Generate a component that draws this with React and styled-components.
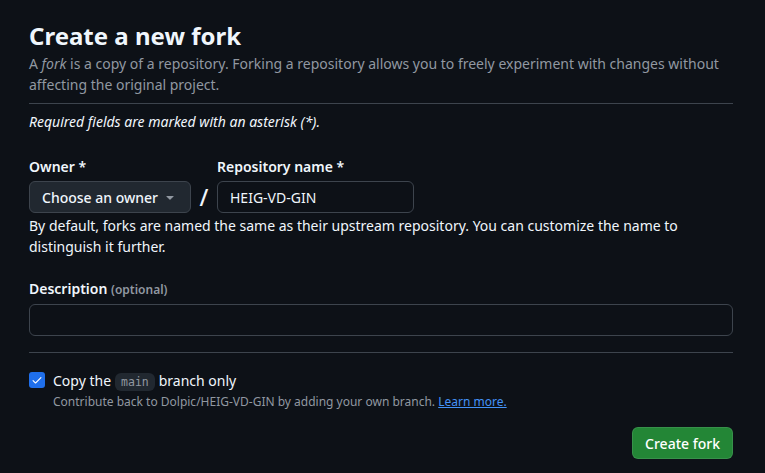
import React from "react";
import styled, { createGlobalStyle } from "styled-components";

const Global = createGlobalStyle`
  html, body {
    margin: 0;
    background: #0d1117;
    color: #f0f6fc;
    font-family: "Noto Sans", "Liberation Sans", sans-serif;
    font-size: 14px;
    line-height: 21px;
  }
  * { box-sizing: border-box; }
`;

const Page = styled.div`
  width: 704px;
  margin-left: 29px;
  padding-top: 21px;
`;

const Title = styled.h1`
  margin: 0;
  font-size: 24px;
  line-height: 30px;
  font-weight: 700;
  color: #f0f6fc;
`;

const Lead = styled.p`
  margin: 2px 0 8px;
  color: #9198a1;
`;

const Divider = styled.hr`
  margin: 0;
  border: 0;
  border-top: 1px solid #3d444d;
`;

const Note = styled.p`
  margin: 7px 0 0;
  font-style: italic;
  color: #f0f6fc;
`;

const Row = styled.div`
  display: flex;
  align-items: flex-end;
  margin-top: ${(p) => p.$top || 0}px;
`;

const Field = styled.div`
  display: flex;
  flex-direction: column;
  gap: 4px;
  flex: ${(p) => (p.$grow ? 1 : "none")};
  width: ${(p) => (p.$width ? `${p.$width}px` : "auto")};
`;

const Label = styled.label`
  font-weight: 600;
  color: #f0f6fc;
  small {
    font-size: 12px;
    color: #9198a1;
    font-weight: 600;
  }
`;

const Select = styled.button`
  height: 32px;
  display: flex;
  align-items: center;
  justify-content: space-between;
  padding: 0 12px 0 12px;
  background: #212830;
  border: 1px solid #3d444d;
  border-radius: 6px;
  color: #f0f6fc;
  font: inherit;
  font-weight: 500;
`;

const Slash = styled.span`
  width: 26px;
  height: 32px;
  display: flex;
  align-items: center;
  justify-content: center;
  font-size: 23px;
  font-weight: 500;
  color: #f0f6fc;
`;

const Input = styled.div`
  height: 32px;
  display: flex;
  align-items: center;
  padding: 0 12px;
  background: #0d1117;
  border: 1px solid #3d444d;
  border-radius: 6px;
  color: #f0f6fc;
`;

const Help = styled.p`
  margin: 2px 0 0;
  color: #f0f6fc;
`;

const Check = styled.div`
  display: flex;
  gap: 8px;
  margin-top: 17px;
`;

const Box = styled.span`
  width: 16px;
  height: 16px;
  margin-top: 2px;
  border-radius: 3px;
  background: #1f6feb;
  display: flex;
  align-items: center;
  justify-content: center;
  flex: none;
`;

const CheckText = styled.div`
  display: flex;
  flex-direction: column;
`;

const Code = styled.code`
  font-family: "DejaVu Sans Mono", "Liberation Mono", monospace;
  font-size: 11.5px;
  color: #9198a1;
  background: #212830;
  border-radius: 6px;
  padding: 2px 6px;
  margin: 0 4px;
`;

const Sub = styled.span`
  font-size: 12px;
  line-height: 18px;
  color: #9198a1;
  a {
    color: #4493f8;
    text-decoration: underline;
  }
`;

const Actions = styled.div`
  display: flex;
  justify-content: flex-end;
  margin-top: 16px;
`;

const Primary = styled.button`
  height: 32px;
  padding: 0 12px;
  background: #238636;
  border: 1px solid rgba(240, 246, 252, 0.1);
  border-radius: 6px;
  color: #ffffff;
  font: inherit;
  font-weight: 500;
`;

export default function App() {
  return (
    <>
      <Global />
      <Page>
        <Title>Create a new fork</Title>
        <Lead>
          A <em>fork</em> is a copy of a repository. Forking a repository allows you to freely experiment with changes without
          affecting the original project.
        </Lead>
        <Divider />
        <Note>Required fields are marked with an asterisk (*).</Note>

        <Row $top={24}>
          <Field $width={162}>
            <Label>Owner *</Label>
            <Select>
              Choose an owner
              <svg width="16" height="16" viewBox="0 0 16 16" fill="#9198a1">
                <path d="m4.427 7.427 3.396 3.396a.25.25 0 0 0 .354 0l3.396-3.396A.25.25 0 0 0 11.396 7H4.604a.25.25 0 0 0-.177.427Z" />
              </svg>
            </Select>
          </Field>
          <Slash>/</Slash>
          <Field $width={197}>
            <Label>Repository name *</Label>
            <Input>HEIG-VD-GIN</Input>
          </Field>
        </Row>
        <Help>
          By default, forks are named the same as their upstream repository. You can customize the name to
          distinguish it further.
        </Help>

        <Row $top={21}>
          <Field $grow>
            <Label>
              Description <small>(optional)</small>
            </Label>
            <Input />
          </Field>
        </Row>

        <Divider style={{ marginTop: 16 }} />

        <Check>
          <Box>
            <svg width="12" height="12" viewBox="0 0 16 16" fill="#fff">
              <path d="M13.78 4.22a.75.75 0 0 1 0 1.06l-7.25 7.25a.75.75 0 0 1-1.06 0L2.22 9.28a.751.751 0 0 1 1.06-1.06L6 10.94l6.72-6.72a.75.75 0 0 1 1.06 0Z" />
            </svg>
          </Box>
          <CheckText>
            <span>
              Copy the<Code>main</Code>branch only
            </span>
            <Sub>
              Contribute back to Dolpic/HEIG-VD-GIN by adding your own branch. <a href="#">Learn more.</a>
            </Sub>
          </CheckText>
        </Check>

        <Actions>
          <Primary>Create fork</Primary>
        </Actions>
      </Page>
    </>
  );
}
